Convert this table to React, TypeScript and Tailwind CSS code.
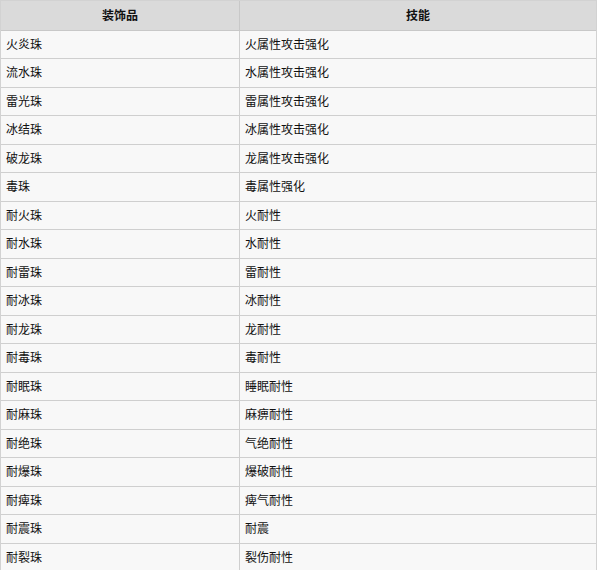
import React from "react";

const rows: [string, string][] = [
  ["火炎珠", "火属性攻击强化"],
  ["流水珠", "水属性攻击强化"],
  ["雷光珠", "雷属性攻击强化"],
  ["冰结珠", "冰属性攻击强化"],
  ["破龙珠", "龙属性攻击强化"],
  ["毒珠", "毒属性强化"],
  ["耐火珠", "火耐性"],
  ["耐水珠", "水耐性"],
  ["耐雷珠", "雷耐性"],
  ["耐冰珠", "冰耐性"],
  ["耐龙珠", "龙耐性"],
  ["耐毒珠", "毒耐性"],
  ["耐眠珠", "睡眠耐性"],
  ["耐麻珠", "麻痹耐性"],
  ["耐绝珠", "气绝耐性"],
  ["耐爆珠", "爆破耐性"],
  ["耐痺珠", "痺气耐性"],
  ["耐震珠", "耐震"],
  ["耐裂珠", "裂伤耐性"],
];

export default function App() {
  return (
    <div
      className="w-[599px] h-[570px] overflow-hidden bg-white text-[12px] text-[#111]"
      style={{ fontFamily: '"Liberation Sans", "Noto Sans CJK SC", sans-serif' }}
    >
      <div className="w-[597px] border-l border-r border-t border-[#d2d2d2]">
        <div className="flex h-[30px] bg-[#dadada] border-b border-[#c8c8c8] font-bold">
          <div className="w-[239px] border-r border-[#c8c8c8] flex items-center justify-center">装饰品</div>
          <div className="flex-1 flex items-center justify-center">技能</div>
        </div>
        {rows.map(([a, b], i) => (
          <div
            key={a}
            className={`flex bg-[#f8f8f8] border-b border-[#cfcfcf] ${i % 2 === 0 ? "h-[28px]" : "h-[29px]"}`}
          >
            <div className="w-[239px] border-r border-[#cfcfcf] flex items-center pl-[5px]">{a}</div>
            <div className="flex-1 flex items-center pl-[5px]">{b}</div>
          </div>
        ))}
      </div>
    </div>
  );
}
